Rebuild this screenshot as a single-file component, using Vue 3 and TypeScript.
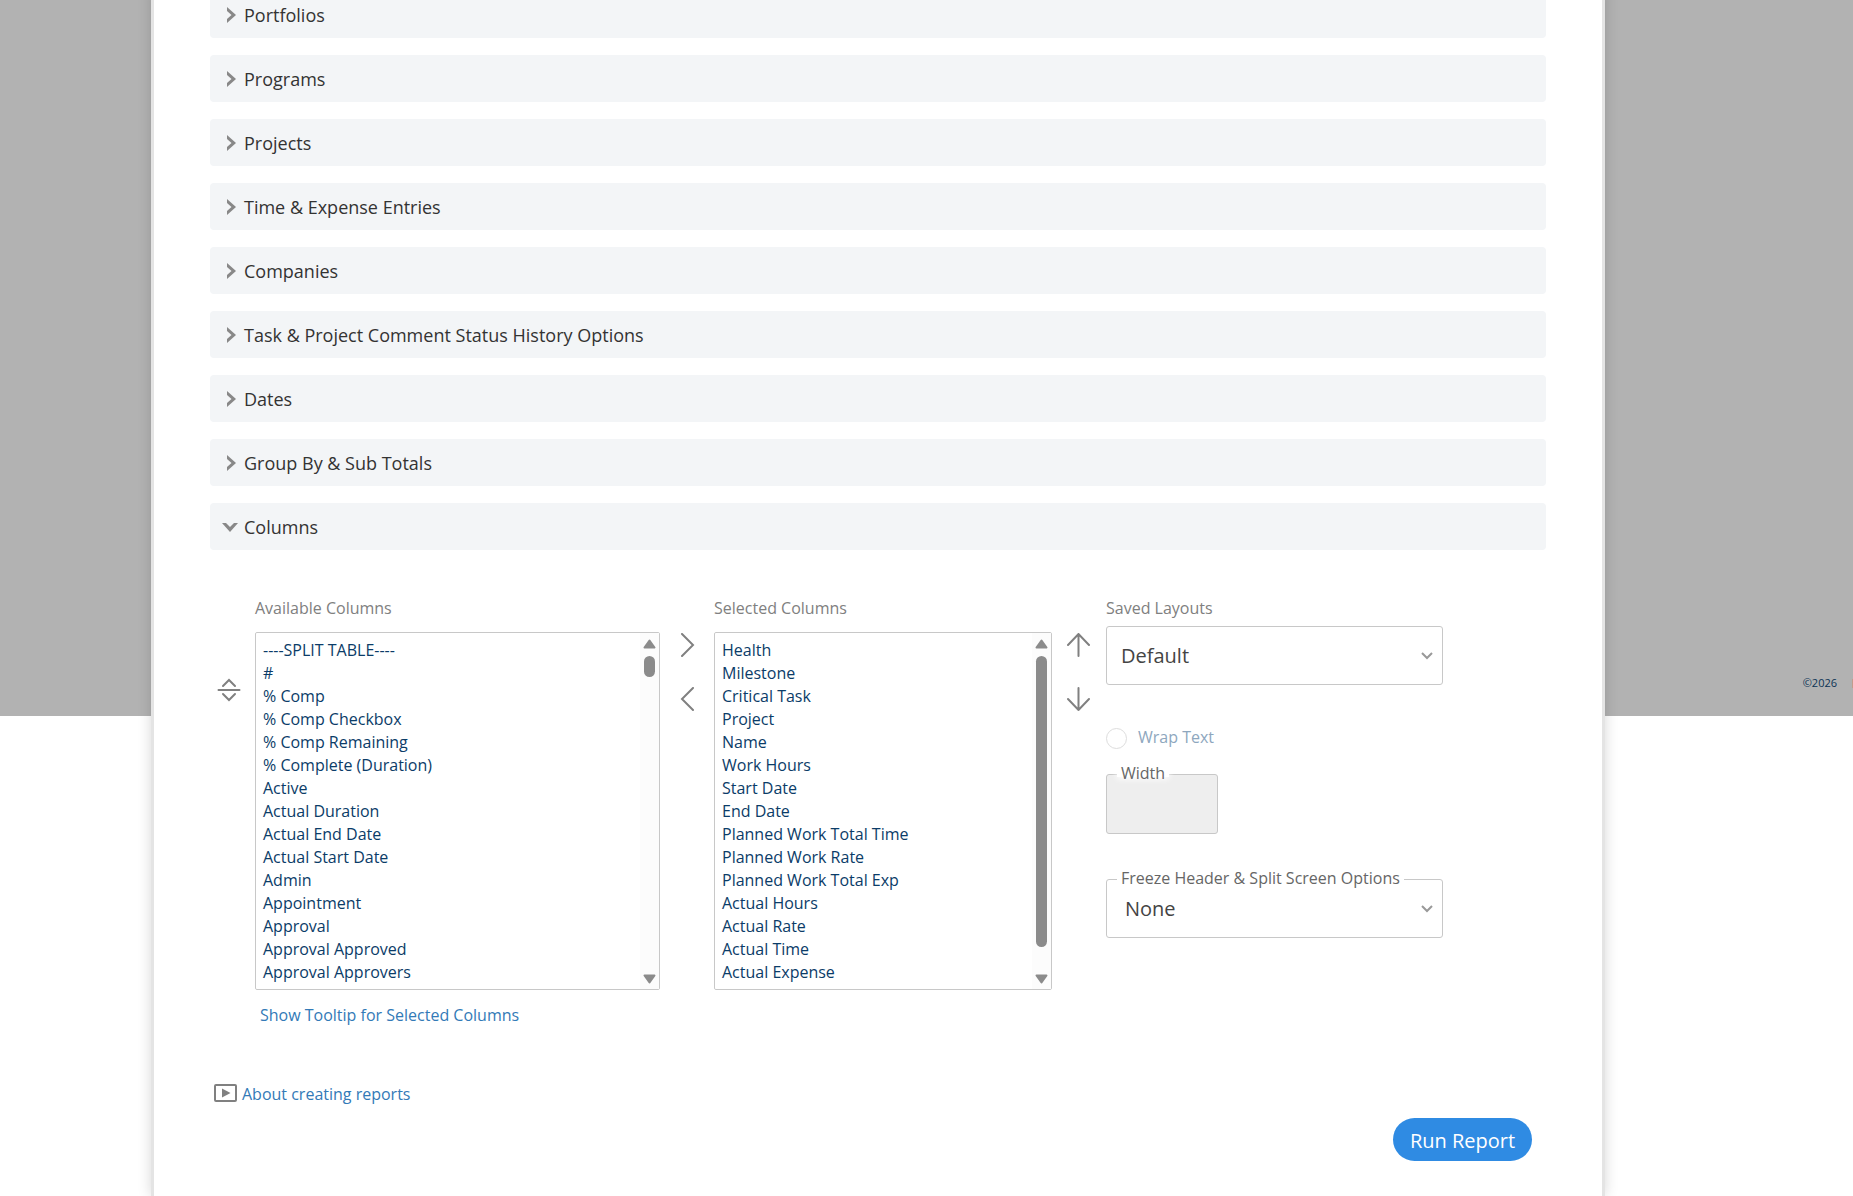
<script setup lang="ts">
import { ref } from 'vue'

interface Section {
  title: string
  open: boolean
}

const sections = ref<Section[]>([
  { title: 'Portfolios', open: false },
  { title: 'Programs', open: false },
  { title: 'Projects', open: false },
  { title: 'Time & Expense Entries', open: false },
  { title: 'Companies', open: false },
  { title: 'Task & Project Comment Status History Options', open: false },
  { title: 'Dates', open: false },
  { title: 'Group By & Sub Totals', open: false },
  { title: 'Columns', open: true },
])

const available: string[] = [
  '----SPLIT TABLE----', '#', '% Comp', '% Comp Checkbox', '% Comp Remaining',
  '% Complete (Duration)', 'Active', 'Actual Duration', 'Actual End Date',
  'Actual Start Date', 'Admin', 'Appointment', 'Approval', 'Approval Approved',
  'Approval Approvers',
]

const selected: string[] = [
  'Health', 'Milestone', 'Critical Task', 'Project', 'Name', 'Work Hours',
  'Start Date', 'End Date', 'Planned Work Total Time', 'Planned Work Rate',
  'Planned Work Total Exp', 'Actual Hours', 'Actual Rate', 'Actual Time',
  'Actual Expense',
]

const layout = ref('Default')
const freeze = ref('None')
</script>

<template>
  <div class="page">
    <footer class="backdrop">
      <span>©2026</span>
      <i class="divider"></i>
    </footer>

    <main class="panel">
      <div class="sections">
        <button v-for="s in sections" :key="s.title" type="button" class="section" :aria-expanded="s.open">
          <svg width="16" height="16" viewBox="0 0 16 16" aria-hidden="true">
            <path v-if="s.open" d="M0 4H4L8 8L12 4H16L8 13Z" />
            <path v-else d="M5 0L14 8L5 16V12L9.500 8L5 4Z" />
          </svg>
          <span>{{ s.title }}</span>
        </button>
      </div>

      <div class="columns">
        <button type="button" class="icon-btn splitter" aria-label="Insert split">
          <svg width="24" height="24" viewBox="0 0 24 24">
            <path d="M1.500 12H22.500M6 8L12 2L18 8M6 16L12 22L18 16" />
          </svg>
        </button>

        <div class="picker available">
          <label for="available" class="caption">Available Columns</label>
          <div class="listbox">
            <select id="available" multiple size="15">
              <option v-for="o in available" :key="o">{{ o }}</option>
            </select>
            <div class="scrollbar" aria-hidden="true">
              <svg width="13" height="10" viewBox="0 0 13 10"><path d="M6.500 1.500L11.500 8.500H1.500Z" /></svg>
              <div class="track"><div class="thumb short"></div></div>
              <svg width="13" height="10" viewBox="0 0 13 10"><path d="M6.500 8.500L11.500 1.500H1.500Z" /></svg>
            </div>
          </div>
          <a href="#" class="tooltip-link">Show Tooltip for Selected Columns</a>
        </div>

        <div class="moves">
          <button type="button" class="icon-btn" aria-label="Add">
            <svg width="24" height="24" viewBox="0 0 24 24"><path d="M7 1L18 12L7 23" /></svg>
          </button>
          <button type="button" class="icon-btn" aria-label="Remove">
            <svg width="24" height="24" viewBox="0 0 24 24"><path d="M18 1L7 12L18 23" /></svg>
          </button>
        </div>

        <div class="picker selected">
          <label for="selected" class="caption">Selected Columns</label>
          <div class="listbox">
            <select id="selected" multiple size="15">
              <option v-for="o in selected" :key="o">{{ o }}</option>
            </select>
            <div class="scrollbar" aria-hidden="true">
              <svg width="13" height="10" viewBox="0 0 13 10"><path d="M6.500 1.500L11.500 8.500H1.500Z" /></svg>
              <div class="track"><div class="thumb long"></div></div>
              <svg width="13" height="10" viewBox="0 0 13 10"><path d="M6.500 8.500L11.500 1.500H1.500Z" /></svg>
            </div>
          </div>
        </div>

        <div class="moves">
          <button type="button" class="icon-btn" aria-label="Move up">
            <svg width="24" height="24" viewBox="0 0 24 24"><path d="M11.500 23V1M1 12L11.500 1L22 12" /></svg>
          </button>
          <button type="button" class="icon-btn" aria-label="Move down">
            <svg width="24" height="24" viewBox="0 0 24 24"><path d="M11.500 1V23M1 12L11.500 23L22 12" /></svg>
          </button>
        </div>

        <div class="options">
          <label for="layout" class="caption">Saved Layouts</label>
          <div class="field saved">
            <select id="layout" v-model="layout" class="dropdown">
              <option>Default</option>
            </select>
            <svg class="caret" width="12" height="8" viewBox="0 0 12 8" aria-hidden="true"><path d="M1 1L6 6L11 1" /></svg>
          </div>

          <label class="wrap">
            <input type="checkbox" disabled />
            <span>Wrap Text</span>
          </label>

          <div class="field width">
            <label for="width" class="float">Width</label>
            <input id="width" type="text" disabled />
          </div>

          <div class="field freeze">
            <label for="freeze" class="float">Freeze Header &amp; Split Screen Options</label>
            <select id="freeze" v-model="freeze" class="dropdown">
              <option>None</option>
            </select>
            <svg class="caret" width="12" height="8" viewBox="0 0 12 8" aria-hidden="true"><path d="M1 1L6 6L11 1" /></svg>
          </div>
        </div>
      </div>

      <a href="#" class="about">
        <svg width="24" height="20" viewBox="0 0 24 20" aria-hidden="true">
          <rect x="1" y="1" width="21" height="16" rx="1" fill="none" stroke="#808080" stroke-width="2" />
          <path d="M8 4.500L16.500 9L8 13.500Z" fill="#808080" />
        </svg>
        <span>About creating reports</span>
      </a>

      <div class="actions">
        <button type="button" class="run">Run Report</button>
      </div>
    </main>
  </div>
</template>

<style>
body {
  background: #fff;
}
</style>

<style scoped>
.page {
  position: relative;
  min-height: 100vh;
  padding: 0 248px 0 151px;
  box-sizing: border-box;
  overflow: hidden;
  font-family: "Open Sans", "Noto Sans", sans-serif;
  font-size: 16px;
  line-height: 22px;
}
.page * {
  box-sizing: border-box;
}
button,
input,
select {
  margin: 0;
  font: inherit;
}
a {
  color: #337ab7;
  text-decoration: none;
}
.backdrop {
  position: absolute;
  top: 0;
  left: 0;
  right: 0;
  height: 716px;
  padding-bottom: 22px;
  display: flex;
  justify-content: flex-end;
  align-items: flex-end;
  gap: 15px;
  background: #b2b2b2;
  color: #0b3354;
  font-size: 11px;
}
.divider {
  width: 1px;
  height: 9px;
  margin-bottom: 6px;
  background: #c29c8c;
}
.panel {
  position: relative;
  min-height: 100vh;
  padding: 0 56px 35px;
  background: #fff;
  border: solid #e4e4e4;
  border-width: 0 3px;
  box-shadow: 0 0 13px rgba(0, 0, 0, 0.16);
}
.sections {
  display: flex;
  flex-direction: column;
  gap: 17px;
  margin-top: -9px;
}
.section {
  display: flex;
  align-items: center;
  gap: 6px;
  height: 47px;
  padding: 0 12px;
  border: 0;
  border-radius: 4px;
  background: #f3f5f7;
  color: #333;
  font-size: 18px;
  text-align: left;
}
.section svg {
  fill: #888;
}
.columns {
  display: flex;
  align-items: flex-start;
  padding-top: 47px;
}
.icon-btn {
  display: block;
  width: 24px;
  height: 24px;
  padding: 0;
  border: 0;
  background: none;
}
.icon-btn svg {
  display: block;
  fill: none;
  stroke: #808080;
  stroke-width: 2;
  stroke-linecap: round;
}
.splitter {
  flex: none;
  margin: 81px 14px 0 7px;
}
.caption {
  display: block;
  color: #808080;
}
.available {
  width: 405px;
}
.selected {
  width: 338px;
}
.listbox {
  position: relative;
  height: 358px;
  margin-top: 13px;
  border: 1px solid #c8c8c8;
  border-radius: 2px;
}
.listbox select {
  display: block;
  width: 100%;
  height: 100%;
  padding: 6px 0 0 7px;
  border: 0;
  outline: 0;
  background: #fff;
  color: #0b3c68;
  overflow: hidden;
}
.listbox option {
  height: 23px;
  min-height: 23px;
  padding: 0;
  line-height: 23px;
}
.scrollbar {
  position: absolute;
  top: 0;
  right: 0;
  bottom: 0;
  width: 19px;
  padding: 6px 0 5px;
  display: flex;
  flex-direction: column;
  align-items: center;
  background: #fcfcfc;
}
.scrollbar svg {
  flex: none;
  fill: #8b8b8b;
  stroke: #8b8b8b;
  stroke-width: 2;
  stroke-linejoin: round;
}
.track {
  flex: 1;
  padding-top: 7px;
}
.thumb {
  width: 11px;
  border-radius: 6px;
  background: #8b8b8b;
}
.thumb.short {
  height: 21px;
}
.thumb.long {
  height: 291px;
}
.tooltip-link {
  display: block;
  margin: 14px 0 0 5px;
}
.moves {
  display: flex;
  flex-direction: column;
  align-items: center;
  gap: 30px;
  width: 54px;
  padding-top: 36px;
}
.options {
  width: 337px;
}
.field {
  position: relative;
}
.saved {
  margin-top: 7px;
}
.dropdown {
  display: block;
  width: 100%;
  height: 59px;
  padding: 0 14px;
  appearance: none;
  border: 1px solid #c8c8c8;
  border-radius: 3px;
  background: #fff;
  color: #444;
  font-size: 20px;
}
.freeze .dropdown {
  padding-left: 18px;
}
.caret {
  position: absolute;
  top: 26px;
  right: 10px;
  fill: none;
  stroke: #999;
  stroke-width: 2;
}
.wrap {
  display: flex;
  align-items: center;
  gap: 11px;
  height: 22px;
  margin-top: 42px;
  color: #8ea7be;
}
.wrap span {
  padding-bottom: 2px;
}
.wrap input {
  width: 21px;
  height: 21px;
  appearance: none;
  border: 1px solid #ddd;
  border-radius: 50%;
  background: #fff;
}
.float {
  position: absolute;
  top: -12px;
  left: 11px;
  padding: 0 4px;
  color: #666;
  background: #fff;
}
.width {
  width: 112px;
  margin-top: 25px;
}
.width .float {
  height: 15px;
  box-shadow: 0 2px 6px #fff;
}
.width input {
  display: block;
  width: 100%;
  height: 60px;
  border: 1px solid #c8c8c8;
  border-radius: 3px;
  background: #eee;
}
.freeze {
  margin-top: 45px;
}
.about {
  display: flex;
  align-items: center;
  gap: 4px;
  width: max-content;
  margin: 57px 0 0 4px;
}
.actions {
  display: flex;
  justify-content: flex-end;
  padding: 13px 14px 0 0;
}
.run {
  width: 139px;
  height: 43px;
  padding: 2px 0 0;
  border: 0;
  border-radius: 22px;
  background: #2f8be3;
  color: #fff;
  font-size: 20px;
}
</style>
